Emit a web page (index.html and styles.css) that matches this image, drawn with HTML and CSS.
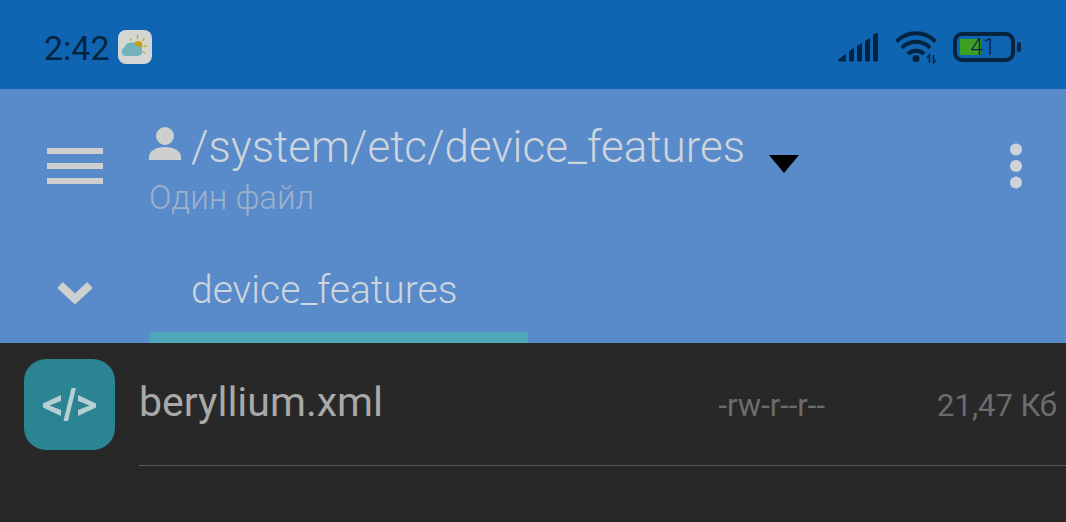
FILE: index.html
```html
<!DOCTYPE html>
<html lang="ru">

<head>
    <meta charset="UTF-8">
    <meta name="viewport" content="width=device-width, initial-scale=1.0">
    <title>device_features</title>
    <link rel="stylesheet" href="styles.css">
</head>

<body>
    <!-- system status bar -->
    <div class="status-bar">
        <span class="clock">2:42</span>
        <svg class="weather" width="34" height="34" viewBox="0 0 34 34">
            <rect width="34" height="34" rx="8" fill="#d3d6d3" />
            <g stroke="#c3a93a" stroke-width="1.5" stroke-linecap="round">
                <path d="M12.500 9l.5 1M19.500 5.500v2.500M26 9l-1.500 1.500M28.500 16h-2M26.500 23l-1-1" />
            </g>
            <circle cx="20" cy="15.500" r="4.500" fill="#c6a013" />
            <path d="M7 26a4.500 4.500 0 0 1-.5-8.500 6.500 6.500 0 0 1 12-1.500 5 5 0 0 1 1.500 10z" fill="#72b2bb" />
        </svg>
        <div class="indicators">
            <svg width="42" height="32" viewBox="0 0 42 32" fill="#052440">
                <path d="M0 29.500q0-1.500 8-6.500v7.500H1q-1 0-1-1z" />
                <path d="M11 20l5-3v13.500h-5zM19 15l5-3v18.500h-5zM27 10l5-3v23.500h-5zM35 5q0-3 5-3v28.500h-5z" />
            </svg>
            <svg width="43" height="36" viewBox="0 0 43 36" fill="none" stroke="#052440" stroke-width="4">
                <path d="M1.500 12.500a27 27 0 0 1 39 0M7 19a19 19 0 0 1 28 0M13 25a11.500 11.500 0 0 1 16 0" />
                <circle cx="21" cy="29.500" r="3.500" fill="#052440" stroke="none" />
                <path d="M34.500 34v-8l-2.500 3M38.500 26v8l2.500-3" stroke-width="1.500" />
            </svg>
            <div class="battery"><span class="battery-level">41</span></div>
        </div>
    </div>

    <header class="header">
        <div class="toolbar">
            <button class="icon-button" type="button" aria-label="Меню">
                <svg width="56" height="36" viewBox="0 0 56 36" fill="#ced0d0">
                    <path d="M0 0h56v6H0zM0 15h56v6H0zM0 30h56v6H0z" />
                </svg>
            </button>
            <div class="location">
                <button class="path" type="button">
                    <svg class="user" width="32" height="34" viewBox="0 0 32 34" fill="#ced0d0">
                        <circle cx="16" cy="9" r="9" />
                        <path d="M0 33v-3c0-6 7-10 16-10s16 4 16 10v3z" />
                    </svg>
                    <span>/system/etc/device_features</span>
                    <svg class="arrow" width="30" height="18" viewBox="0 0 30 18">
                        <path d="M0 0h30L15 18z" />
                    </svg>
                </button>
                <div class="count">Один файл</div>
            </div>
            <button class="icon-button more" type="button" aria-label="Ещё">
                <svg width="12" height="46" viewBox="0 0 12 46" fill="#ced3da">
                    <circle cx="6" cy="6.500" r="6" />
                    <circle cx="6" cy="23" r="6" />
                    <circle cx="6" cy="39.500" r="6" />
                </svg>
            </button>
        </div>

        <nav class="tabs">
            <button class="icon-button" type="button" aria-label="Вкладки">
                <svg width="36" height="24" viewBox="0 0 36 24" fill="none" stroke="#ced0d0" stroke-width="8">
                    <path d="M3 4l15 14L33 4" />
                </svg>
            </button>
            <a class="tab" href="#files">device_features</a>
        </nav>
    </header>

    <!-- list of files -->
    <main class="files" id="files">
        <div class="file">
            <svg class="file-icon" width="91" height="91" viewBox="0 0 91 91">
                <rect width="91" height="91" rx="22" fill="#2b8491" />
                <g fill="#b5cfd3">
                    <path d="M37 36v6l-11.500 4.500L37 51v6l-18-8.500v-4z" />
                    <path d="M54 36v6l11.500 4.500L54 51v6l18-8.500v-4z" />
                    <path d="M47.500 29h4.500l-8 33h-4.500z" />
                </g>
            </svg>
            <div class="file-info">
                <span class="file-name">beryllium.xml</span>
                <span class="file-mode">-rw-r--r--</span>
                <span class="file-size">21,47 Кб</span>
            </div>
        </div>
    </main>
</body>

</html>
```
FILE: styles.css
```css
body {
    margin: 0;
    background: #282828;
    font-family: Roboto, "Noto Sans", sans-serif;
}

button {
    padding: 0;
    border: none;
    background: none;
    font-family: inherit;
    cursor: pointer;
}

svg {
    display: block;
    flex-shrink: 0;
}

.status-bar {
    display: flex;
    align-items: center;
    height: 89px;
    padding: 4px 44px 0;
    box-sizing: border-box;
    background: #0f65b2;
    color: #052440;
}

.clock {
    padding-top: 2px;
    font-size: 34px;
}

.weather {
    margin-left: 8px;
}

.indicators {
    display: flex;
    align-items: center;
    gap: 15px;
    margin-left: auto;
}

.battery {
    position: relative;
    width: 62px;
    height: 30px;
    margin-right: 7px;
    padding: 6px 8px 6px 6px;
    box-sizing: border-box;
    border: 4px solid #052440;
    border-radius: 9px;
    background: linear-gradient(#3d9f21, #3d9f21) 3px 3px / 21px 16px no-repeat;
}

/* battery tip */
.battery::after {
    content: "";
    position: absolute;
    top: 6px;
    right: -10px;
    width: 4px;
    height: 10px;
    border-radius: 2px;
    background: #052440;
}

.battery-level {
    display: block;
    margin-top: -6px;
    font-size: 23px;
    font-weight: 300;
    line-height: 24px;
    text-align: center;
}

.header {
    background: #598bcb;
    color: #ced5dc;
    font-weight: 300;
}

.toolbar {
    display: flex;
    height: 154px;
}

.icon-button {
    display: flex;
    align-items: center;
    justify-content: center;
    flex-shrink: 0;
    width: 149px;
}

.more {
    width: 100px;
    margin-left: auto;
}

.location {
    padding-top: 29px;
}

.path {
    display: flex;
    align-items: center;
    color: inherit;
    font-size: 44px;
    font-weight: 300;
    line-height: 58px;
}

.user {
    margin: 0 10px 6px 0;
}

.arrow {
    margin: 34px 0 0 24px;
}

.count {
    color: #9eb0cb;
    font-size: 33px;
    line-height: 44px;
}

.tabs {
    display: flex;
    height: 100px;
}

.tab {
    padding: 0 71px 0 42px;
    border-bottom: 11px solid #4ea6b8;
    color: inherit;
    font-size: 39px;
    line-height: 94px;
    text-decoration: none;
}

.file {
    display: flex;
    gap: 24px;
    padding-left: 24px;
}

.file-icon {
    margin-top: 16px;
}

.file-info {
    display: flex;
    flex: 1;
    align-items: baseline;
    height: 122px;
    padding-right: 9px;
    border-bottom: 1px solid #595959;
    color: #6c6c6c;
    font-size: 31px;
    line-height: 118px;
}

.file-name {
    color: #a9a9a9;
    font-size: 41px;
}

.file-mode {
    margin-left: auto;
}

.file-size {
    width: 232px;
    text-align: right;
}
```
